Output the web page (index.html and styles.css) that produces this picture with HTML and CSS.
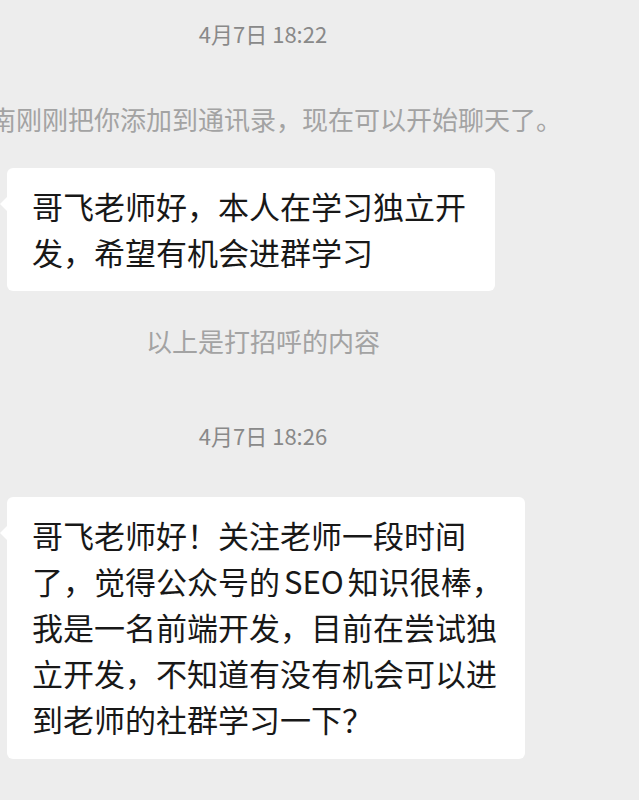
FILE: index.html
```html
<!DOCTYPE html>
<html lang="zh-CN">
<head>
  <meta charset="UTF-8">
  <meta name="viewport" content="width=device-width, initial-scale=1.0">
  <title>聊天记录</title>
  <link rel="stylesheet" href="styles.css">
</head>
<body>
  <div class="chat">
    <div class="notice time time-first">4月7日 18:22</div>
    <div class="notice system">小南刚刚把你添加到通讯录，现在可以开始聊天了。</div>

    <div class="msg">
      <div class="bubble">哥飞老师好，本人在学习独立开<br>发，希望有机会进群学习</div>
    </div>

    <div class="notice system system-after">以上是打招呼的内容</div>
    <div class="notice time">4月7日 18:26</div>

    <div class="msg msg-after-time">
      <div class="bubble bubble-long">哥飞老师好！关注老师一段时间<br>了，觉得公众号的<span class="latin">SEO</span>知识很棒，<br>我是一名前端开发，目前在尝试独<br>立开发，不知道有没有机会可以进<br>到老师的社群学习一下？</div>
    </div>
  </div>
</body>
</html>
```

FILE: styles.css
```css
/* Base */
body {
  margin: 0;
  padding: 0;
  background-color: #EDEDED;
  font-family: "Noto Sans CJK SC", "Noto Sans", sans-serif;
  overflow: hidden;
}

/* Chat column (left part of the original screen) */
.chat {
  display: flex;
  flex-direction: column;
  width: 526px;
  padding-top: 18px;
}

/* Centered timestamps and system lines */
.notice {
  display: flex;
  justify-content: center;
  white-space: nowrap;
}

.time {
  font-size: 22px;
  line-height: 30px;
  color: #898989;
  margin-top: 61px;
}

.time-first {
  margin-top: 0;
}

.system {
  font-size: 26px;
  line-height: 36px;
  color: #A3A3A3;
  margin-top: 53px;
}

.system-after {
  margin-top: 32px;
}

/* Message rows */
.msg {
  display: flex;
  padding-left: 7px;
  margin-top: 31px;
}

.msg-after-time {
  margin-top: 47px;
}

.bubble {
  position: relative;
  background-color: #FFFFFF;
  color: #181818;
  font-size: 31px;
  line-height: 46px;
  padding: 15px 29px 16px 25px;
  border-radius: 6px;
  white-space: nowrap;
}

.bubble-long {
  padding-right: 22px;
  padding-bottom: 17px;
}

/* latin words get a little air next to CJK text */
.latin {
  margin: 0 4px;
}

/* little tail pointing at the avatar */
.bubble::before {
  content: '';
  position: absolute;
  left: -7px;
  top: 29px;
  border-top: 7px solid transparent;
  border-bottom: 7px solid transparent;
  border-right: 7px solid #FFFFFF;
}
```
